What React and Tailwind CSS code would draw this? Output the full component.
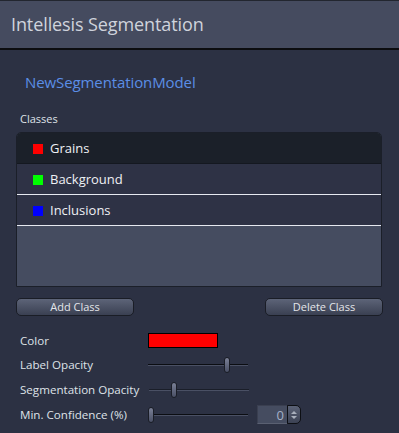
import React from "react";

const classes = [
  { name: "Grains", color: "bg-[#ff0000]", selected: true },
  { name: "Background", color: "bg-[#00ff00]" },
  { name: "Inclusions", color: "bg-[#0000ff]" },
];

function Slider({ pos, dark }) {
  return (
    <div className="relative h-[16px] w-[100px]">
      <div
        className={`absolute left-0 right-0 top-[7px] h-[2px] ${
          dark ? "bg-[#0b0d12]" : "bg-[#1a1e29]"
        } border-b border-[#4a5064]`}
      />
      <div
        className="absolute top-0 h-[16px] w-[6px] rounded-[3px] border border-[#1a1d26] bg-gradient-to-b from-[#7a8096] to-[#4a5066]"
        style={{ left: pos }}
      />
    </div>
  );
}

export default function App() {
  return (
    <div
      className="w-[399px] h-[433px] bg-[#2c3143] overflow-hidden text-[#dfe2e8]"
      style={{ fontFamily: '"Open Sans", "Noto Sans", sans-serif' }}
    >
      {/* header */}
      <div className="h-[50px] bg-[#454b5f] border-t border-[#22262f] border-b-2 border-b-[#0c0d10] flex items-center pl-[11px]">
        <h1 className="text-[18px] text-[#cfd3dc] tracking-[-0.1px]">Intellesis Segmentation</h1>
      </div>

      <div className="px-[16px]">
        <div className="pt-[21px] pl-[9px] text-[15px] tracking-[-0.1px] text-[#5b8ee6] h-[58px]">NewSegmentationModel</div>

        <div className="pt-[3px] pl-[4px] text-[11px] text-[#dfe2e8] h-[24px]">Classes</div>

        {/* list */}
        <div className="w-[366px] h-[155px] rounded-t-[5px] border border-[#1b1f29] bg-[#454c60] overflow-hidden flex flex-col">
          {classes.map((c, i) => (
            <div
              key={c.name}
              className={`h-[31px] pt-[2px] flex items-center pl-[16px] gap-[7px] text-[13px] ${
                c.selected ? "bg-[#1b2029]" : "bg-[#2e3245] border-b border-[#e6e9f0]"
              } ${i === 0 ? "border-b border-[#141820]" : ""}`}
            >
              <span className={`w-[10px] h-[10px] ${c.color}`} />
              <span className="text-[#eef0f4]">{c.name}</span>
            </div>
          ))}
        </div>

        {/* buttons */}
        <div className="flex justify-between mt-[11px]">
          <button className="w-[118px] h-[18px] rounded-[5px] border border-[#1a1d26] bg-gradient-to-b from-[#5d6478] to-[#3a4052] text-[11px] leading-[16px] text-[#e4e6ea]">
            Add Class
          </button>
          <button className="w-[118px] h-[18px] rounded-[5px] border border-[#1a1d26] bg-gradient-to-b from-[#5d6478] to-[#3a4052] text-[11px] leading-[16px] text-[#e4e6ea]">
            Delete Class
          </button>
        </div>

        {/* properties */}
        <div className="mt-[13px] flex flex-col text-[11.6px] text-[#dfe2e8]">
          <div className="h-[23px] flex items-center">
            <span className="w-[132px] pl-[4px]">Color</span>
            <span className="w-[70px] h-[15px] bg-[#ff0000] border border-black" />
          </div>
          <div className="h-[25px] flex items-center">
            <span className="w-[132px] pl-[4px]">Label Opacity</span>
            <Slider pos="76px" dark />
          </div>
          <div className="h-[25px] flex items-center">
            <span className="w-[133px] pl-[4px] whitespace-nowrap">Segmentation Opacity</span>
            <Slider pos="22px" />
          </div>
          <div className="h-[25px] flex items-center">
            <span className="w-[132px] pl-[4px] whitespace-nowrap">Min. Confidence (%)</span>
            <Slider pos="0px" dark />
            <div className="ml-[9px] flex h-[19px]">
              <div className="w-[30px] h-[19px] bg-[#454c60] border-t border-l border-[#3a3f50] border-b border-b-[#5a6072] text-right pr-[3px] text-[13px] leading-[18px] text-[#a4b0c8]">
                0
              </div>
              <div className="w-[14px] h-[19px] rounded-r-[5px] border border-[#0d0f14] bg-gradient-to-b from-[#5b6276] to-[#3c4254] flex flex-col items-center justify-center gap-[2px]">
                <span className="w-0 h-0 border-l-[3px] border-r-[3px] border-b-[3px] border-l-transparent border-r-transparent border-b-[#aab0bd]" />
                <span className="w-0 h-0 border-l-[3px] border-r-[3px] border-t-[3px] border-l-transparent border-r-transparent border-t-[#aab0bd]" />
              </div>
            </div>
          </div>
        </div>
      </div>
    </div>
  );
}
